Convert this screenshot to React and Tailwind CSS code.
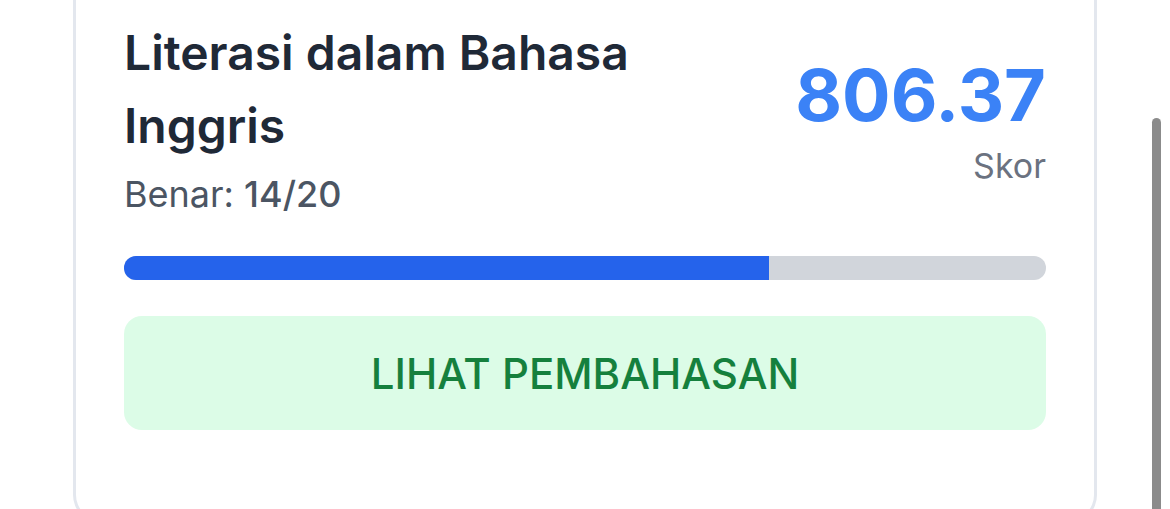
export default function App() {
  const benar = 14;
  const total = 20;
  const pct = (benar / total) * 100;

  return (
    <div className="relative h-[509px] overflow-hidden bg-white font-['Inter',sans-serif]">
      <div className="px-[73px]">
        <div className="rounded-b-[28px] border-[3px] border-t-0 border-[#e3e7ee] px-[48px] pt-[16px] pb-[90px]">
          <div className="flex items-center justify-between gap-8">
            <div className="flex-1">
              <h2 className="text-[48px] font-semibold leading-[73px] text-[#1f2937]">
                Literasi dalam Bahasa
                <br />
                Inggris
              </h2>
              <p className="mt-[6px] text-[36px] leading-[52px] text-[#4b5563]">
                Benar: <span className="font-medium">{benar}/{total}</span>
              </p>
            </div>
            <div className="pt-[12px] text-right">
              <div className="text-[72px] font-bold leading-none text-[#3b82f6]">806.37</div>
              <div className="mt-[11px] text-[34px] leading-[48px] text-[#6b7280]">Skor</div>
            </div>
          </div>

          <div className="mt-[36px] h-[24px] w-full overflow-hidden rounded-full bg-[#d1d5db]">
            <div className="h-full bg-[#2563eb]" style={{ width: `${pct}%` }} />
          </div>

          <button className="mt-[36px] flex h-[114px] w-full items-center justify-center rounded-[18px] bg-[#dcfce7] text-[42px] font-medium text-[#15803d]">
            LIHAT PEMBAHASAN
          </button>
        </div>
      </div>

      {/* scrollbar thumb */}
      <div className="absolute right-[9px] top-[118px] bottom-0 w-[9px] rounded-t-full bg-[#8b8b8b]" />
    </div>
  );
}
